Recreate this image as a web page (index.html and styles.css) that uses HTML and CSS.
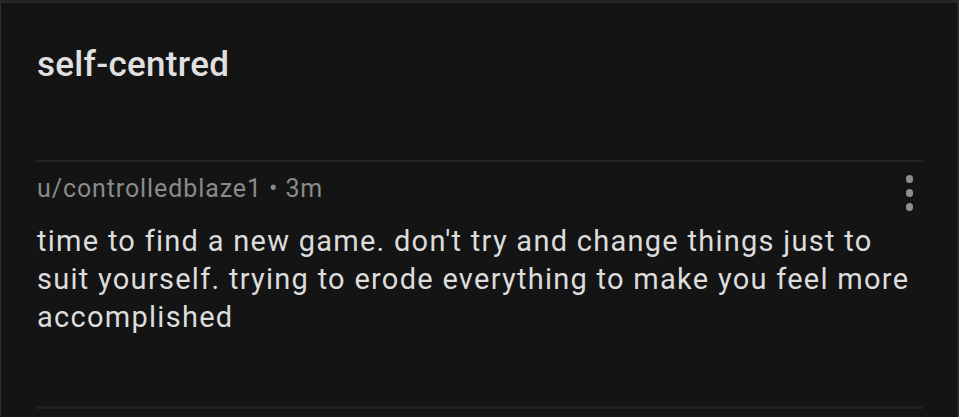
FILE: index.html
```html
<!DOCTYPE html>
<html>
	<head>
		<meta charset="UTF-8">
		<title>self-centred</title>
		<link rel="stylesheet" href="styles.css">
	</head>
	<body>
		<div class="screen">
			<h1 class="title">self-centred</h1>
			<div class="comment">
				<div class="meta">
					<span class="user">u/controlledblaze1 • 3m</span>
					<span class="more"><i></i><i></i><i></i></span>
				</div>
				<p class="text">time to find a new game. don't try and change things just to suit yourself. trying to erode everything to make you feel more accomplished</p>
			</div>
		</div>
	</body>
</html>
```

FILE: styles.css
```css
*{
	padding: 0;
	margin: 0;
	box-sizing: border-box;
}
html,body{
	background: #141414;
}
.screen{
	width: 959px;
	height: 417px;
	border-top: 3px solid #23272b;
	border-left: 1px solid #303030;
	border-right: 2px solid #2a2a2a;
	padding: 0 34px 0 35px;
	font-family: Roboto, "Noto Sans", sans-serif;
	overflow: hidden;
}
.title{
	font-size: 35px;
	font-weight: 500;
	letter-spacing: 0.3px;
	color: #e0e0e0;
	line-height: 36px;
	padding: 44px 0 0 1px;
	height: 159px;
	border-bottom: 2px solid #262626;
}
.comment{
	padding: 12px 0 0 1px;
	height: 247px;
	border-bottom: 3px solid #202020;
}
.meta{
	display: flex;
	justify-content: space-between;
	align-items: flex-start;
}
.user{
	font-size: 25px;
	letter-spacing: 0.9px;
	line-height: 30px;
	color: #8a8a8a;
}
.more{
	display: flex;
	flex-direction: column;
	gap: 6.5px;
	padding: 1px 10px 0 0;
}
.more i{
	display: block;
	width: 7.5px;
	height: 7.5px;
	border-radius: 50%;
	background: #8e8e8e;
}
.text{
	margin-top: 11px;
	font-size: 29px;
	letter-spacing: 1.27px;
	line-height: 38px;
	color: #dcdcdc;
	padding-right: 2px;
}
```
